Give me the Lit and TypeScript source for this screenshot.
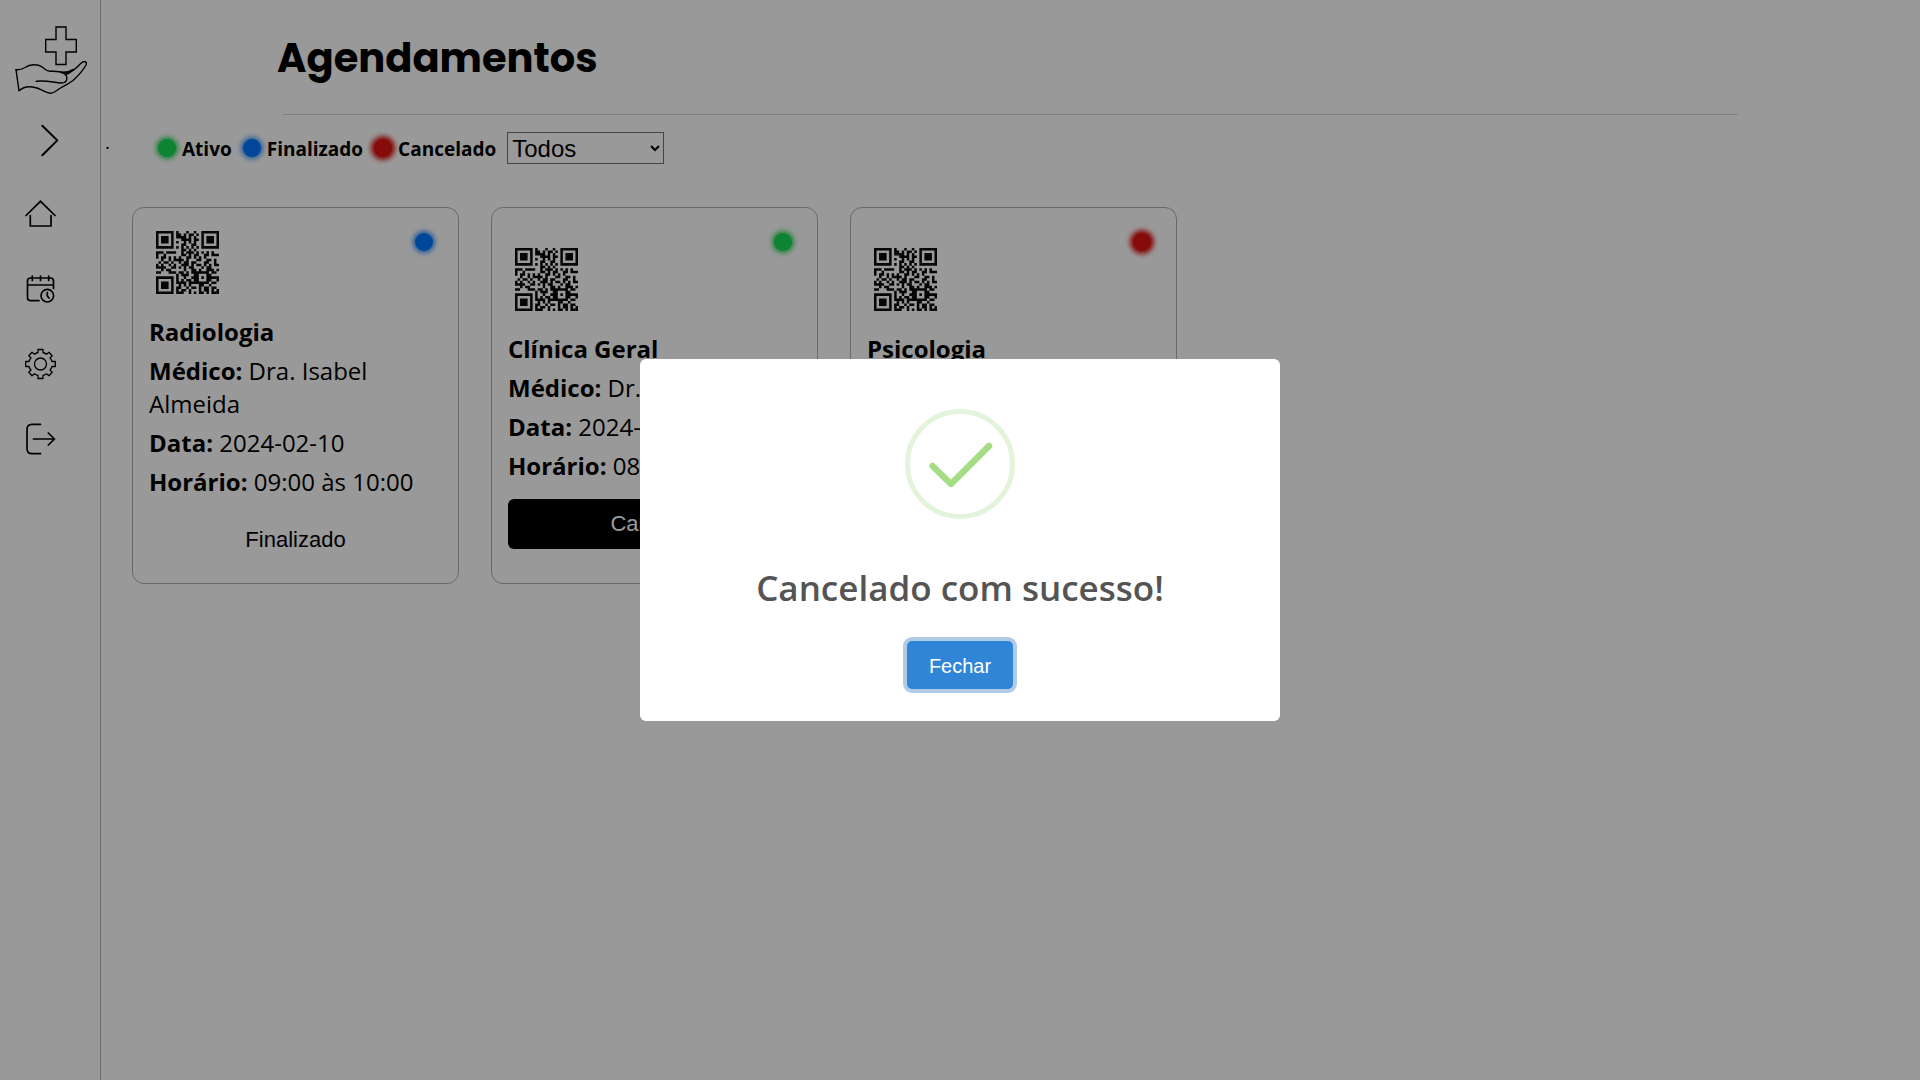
import { LitElement, html, css, svg, nothing } from "lit";
import { customElement, property, state } from "lit/decorators.js";

type Status = "ativo" | "finalizado" | "cancelado";

interface Appointment {
  specialty: string;
  doctor: string;
  date: string;
  time: string;
  status: Status;
}

const APPOINTMENTS: Appointment[] = [
  { specialty: "Radiologia", doctor: "Dra. Isabel Almeida", date: "2024-02-10", time: "09:00 às 10:00", status: "finalizado" },
  { specialty: "Clínica Geral", doctor: "Dr. Luiz", date: "2024-02-12", time: "08:00 às 09:00", status: "ativo" },
  { specialty: "Psicologia", doctor: "Dra. Ana", date: "2024-02-15", time: "10:00 às 11:00", status: "cancelado" },
];

const STATUS_LABEL: Record<Status, string> = {
  ativo: "Ativo",
  finalizado: "Finalizado",
  cancelado: "Cancelado",
};

const QR_ROWS = [
  "#######.#...#..#..#######",
  "#.....#.##.#.##.#.#.....#",
  "#.###.#.####.#.#..#.###.#",
  "#.###.#...####.##.#.###.#",
  "#.###.#.#..#.#.#..#.###.#",
  "#.....#...##..##..#.....#",
  "#######.#.#.#.#.#.#######",
  "..........##.#.#.........",
  "###.####..#.###.#.#.#.#..",
  "#..#......##.#.##..##.###",
  "#.##.#.#.#..##.#.#.#.....",
  "..#..#.####.#...##..##.#.",
  ".#.##.#..#.##.##...##..#.",
  "#.#..#.#..###.#.##.#.#.##",
  "####..##.#.#.##...#.##...",
  "..#.##.....#..##.#..###.#",
  "##...###.##.#.#######.##.",
  "........#.###..##...##...",
  "#######.#..#..###.#.#####",
  "#.....#.#.#.##.##...##..#",
  "#.###.#.####.########.##.",
  "#.###.#..#.#.#...##..#...",
  "#.###.#.##..#.##.#.##.##.",
  "#.....#.#.##.#...#.##.#.#",
  "#######.###..#.#.##.#.###",
];

const qrPath = QR_ROWS.map((row, y) =>
  [...row].map((c, x) => (c === "#" ? `M${x} ${y}h1v1h-1z` : "")).join("")
).join("");

@customElement("status-dot")
export class StatusDot extends LitElement {
  static styles = css`
    :host { display: block; width: 18px; height: 18px; flex: none; }
    .dot { width: 18px; height: 18px; border-radius: 50%; }
    .ativo { background: #18dd54; box-shadow: 0 0 5px 2px #35d960; }
    .finalizado { background: #0076ff; box-shadow: 0 0 5px 2px #3f95ff; }
    .cancelado { background: #e01414; box-shadow: 0 0 5px 3px #e01414; }
  `;
  @property() status: Status = "ativo";
  render() {
    return html`<div class="dot ${this.status}"></div>`;
  }
}

@customElement("side-bar")
export class SideBar extends LitElement {
  static styles = css`
    :host { display: block; flex: none; width: 100px; border-right: 1px solid #b4b4b4; }
    svg { display: block; fill: none; stroke: #000; stroke-linecap: round; stroke-linejoin: round; }
    .logo { display: block; }
    .toggle { display: block; width: 100px; height: 56px; padding: 0; border: 0; background: none; }
    nav { display: flex; flex-direction: column; padding-top: 8px; }
    .item { display: flex; align-items: center; height: 75px; padding-left: 24px; }
  `;

  private item(label: string, icon: unknown) {
    return html`<a class="item" href="#" aria-label=${label}>
      <svg width="32" height="32" viewBox="0 0 32 32" stroke-width="1.7">${icon}</svg>
    </a>`;
  }

  render() {
    return html`
      <a class="logo" href="#" aria-label="Início">
        <svg width="100" height="112" viewBox="0 0 100 112" stroke-width="1.4">
          <path stroke-linejoin="miter" d="M56 27H66V39.500H76.300V52H66V64.500H56V52H45.700V39.500H56Z" />
          <path d="M16 69.700C19 70 22 69.300 25 67.500C30 64.300 37 63.500 42 66.800C45 69 46 71 50 71.300C55 71 60 71 64 73.500C69 77 67 83.300 61.500 83C54 82.700 46 79.800 36.300 81.300" />
          <path d="M16 69.700L19 90.800C23 87 29 86 35 87.500C41 88.800 45 92.500 50 93.300C54 93.300 57 90 60.500 88C65 85.500 69 83.500 73 80.500C78 76 83 70.500 86 65C87.500 61.500 84 60.300 81 63.300C76.500 68 72 72.500 65.800 74.500M61 72C65 72.500 69 71.800 73 69.500" />
          <path stroke-width="1.800" d="M62 72.500C65 73.700 68 72.500 71 71" />
        </svg>
      </a>
      <button class="toggle" aria-label="Expandir menu">
        <svg width="100" height="56" viewBox="0 0 100 56" stroke-width="2"><path d="M42.300 13.800L57.300 28.400L42.300 43.200" /></svg>
      </button>
      <nav>
        ${this.item("Início", svg`<path d="M2 17.500L16.500 3.300L31 17.500M6.300 17.500V28H27V17.500" stroke-linejoin="miter"/>`)}
        ${this.item("Agendamentos", svg`<path d="M15 27.700H6.500Q3.500 27.700 3.500 24.700V8Q3.500 5 6.500 5H26.500Q29.500 5 29.500 8V15.500M3.500 12H29.500M8.300 3V7.500M16.500 3V7.500M24.700 3V7.500"/><circle cx="23.300" cy="22.700" r="6.300"/><path d="M23.300 19.500V23L25 25"/>`)}
        ${this.item("Configurações", svg`<g stroke-width="1.300"><circle cx="16.500" cy="16" r="6"/><path d="M14 1.500H19V4.500Q21 5 22.500 6.300L25 4.300L28.200 7.700L26 10Q27.500 11.500 28 13.500H31.300V18.500H28Q27.500 20.500 26 22L28.200 24.300L25 27.700L22.500 25.800Q21 27 19 27.500V30.500H14V27.500Q12 27 10.500 25.800L8 27.700L4.800 24.300L7 22Q5.500 20.500 5 18.500H1.700V13.500H5Q5.500 11.500 7 10L4.800 7.700L8 4.300L10.500 6.300Q12 5 14 4.500Z"/></g>`)}
        ${this.item("Sair", svg`<path d="M16.500 1.300H8Q3 1.300 3 6.500V25.500Q3 30.700 8 30.700H16.500M9.500 16H30.500M24.300 10L30.500 16L24.300 22"/>`)}
      </nav>
    `;
  }
}

@customElement("appointment-card")
export class AppointmentCard extends LitElement {
  static styles = css`
    :host { display: flex; }
    .card {
      position: relative; box-sizing: border-box; width: 100%;
      display: flex; flex-direction: column; justify-content: center; gap: 6px;
      padding: 20px 16px 18px; border: 1px solid #b0b0b0; border-radius: 12px;
      font: 24px/33px "Open Sans", "Noto Sans", sans-serif; color: #000;
    }
    .qr { display: block; width: 63px; height: 63px; margin: 3px 0 15px 7px; fill: #0a0a0a; }
    h2, p { margin: 0; font-size: inherit; }
    h2, b { font-weight: 700; }
    status-dot { position: absolute; top: 25px; right: 25px; }
    button {
      height: 50px; margin-top: 11px; border: 0; border-radius: 6px;
      background: #000; color: #fff; font: 22px "Liberation Sans", Arial, sans-serif;
    }
    .plain { background: transparent; color: #000; }
  `;
  @property({ attribute: false }) data!: Appointment;

  render() {
    const a = this.data;
    return html`
      <article class="card">
        <status-dot .status=${a.status}></status-dot>
        <svg class="qr" viewBox="0 0 25 25" role="img" aria-label="QR code"><path d=${qrPath} /></svg>
        <h2>${a.specialty}</h2>
        <p><b>Médico:</b> ${a.doctor}</p>
        <p><b>Data:</b> ${a.date}</p>
        <p><b>Horário:</b> ${a.time}</p>
        ${a.status === "ativo"
          ? html`<button>Cancelar</button>`
          : html`<button class="plain">${STATUS_LABEL[a.status]}</button>`}
      </article>
    `;
  }
}

@customElement("success-dialog")
export class SuccessDialog extends LitElement {
  static styles = css`
    .backdrop {
      position: fixed; inset: 0; display: flex; align-items: center; justify-content: center;
      background: rgba(0, 0, 0, 0.4);
    }
    .modal {
      box-sizing: border-box; width: 640px; max-width: 100%;
      display: flex; flex-direction: column; align-items: center;
      padding: 50px 20px 32px; border-radius: 6px; background: #fff;
    }
    .icon { display: block; width: 110px; height: 110px; fill: none; }
    h2 { margin: 44px 0 29px; font: 600 35px/49px "Open Sans", "Noto Sans", sans-serif; color: #545454; }
    button {
      width: 106px; height: 48px; padding: 2px 0 0; border: 0; border-radius: 5px; outline: 0;
      background: #3085d6; box-shadow: 0 0 0 4px #b0cbe6; color: #fff;
      font: 20px "Liberation Sans", Arial, sans-serif;
    }
  `;

  private close() {
    this.dispatchEvent(new CustomEvent("dismiss"));
  }

  render() {
    return html`
      <div class="backdrop">
        <div class="modal" role="dialog" aria-modal="true" aria-labelledby="title">
          <svg class="icon" viewBox="0 0 110 110">
            <circle cx="55" cy="55" r="52.500" stroke="#e4f4dc" stroke-width="5" />
            <path d="M27.500 57L46 75L84 37" stroke="#a5dc86" stroke-width="6.500" stroke-linecap="round" stroke-linejoin="round" />
          </svg>
          <h2 id="title">Cancelado com sucesso!</h2>
          <button @click=${this.close}>Fechar</button>
        </div>
      </div>
    `;
  }
}

@customElement("app-root")
export class AppRoot extends LitElement {
  static styles = css`
    :host { display: flex; min-height: 100vh; background: #fff; color: #000; font-family: "Open Sans", "Noto Sans", sans-serif; }
    main { flex: 1; min-width: 0; }
    h1 { margin: 0; padding: 28px 0 0 176px; font: 700 40px/60px Poppins, Inter, sans-serif; }
    hr { width: 80%; height: 1px; margin: 26px auto 0; border: 0; background: #d2d2d2; }
    .filters { display: flex; align-items: center; gap: 11px; margin-top: 17px; font: 700 19px/32px "Open Sans", "Noto Sans", sans-serif; }
    .mark { align-self: flex-start; width: 42px; padding-left: 4px; font-weight: 400; line-height: 20px; }
    .entry { display: flex; align-items: center; gap: 6px; height: 32px; }
    .name { padding-top: 2px; }
    select { width: 157px; height: 32px; border: 1px solid #767676; background: #fff; color: #000; font: 24px "Liberation Sans", Arial, sans-serif; }
    .cards { display: grid; grid-template-columns: repeat(auto-fill, 327px); gap: 32px; padding: 43px 31px; }
  `;

  @state() private open = true;
  @state() private filter = "todos";

  render() {
    const shown = APPOINTMENTS.filter((a) => this.filter === "todos" || a.status === this.filter);
    return html`
      <side-bar></side-bar>
      <main>
        <h1>Agendamentos</h1>
        <hr />
        <div class="filters">
          <span class="mark">.</span>
          ${(Object.keys(STATUS_LABEL) as Status[]).map(
            (s) => html`<span class="entry"><status-dot .status=${s}></status-dot><span class="name">${STATUS_LABEL[s]}</span></span>`
          )}
          <select aria-label="Filtrar por status" @change=${(e: Event) => (this.filter = (e.target as HTMLSelectElement).value)}>
            <option value="todos">Todos</option>
            ${(Object.keys(STATUS_LABEL) as Status[]).map((s) => html`<option value=${s}>${STATUS_LABEL[s]}</option>`)}
          </select>
        </div>
        <section class="cards">
          ${shown.map((a) => html`<appointment-card .data=${a}></appointment-card>`)}
        </section>
      </main>
      ${this.open ? html`<success-dialog @dismiss=${() => (this.open = false)}></success-dialog>` : nothing}
    `;
  }
}
